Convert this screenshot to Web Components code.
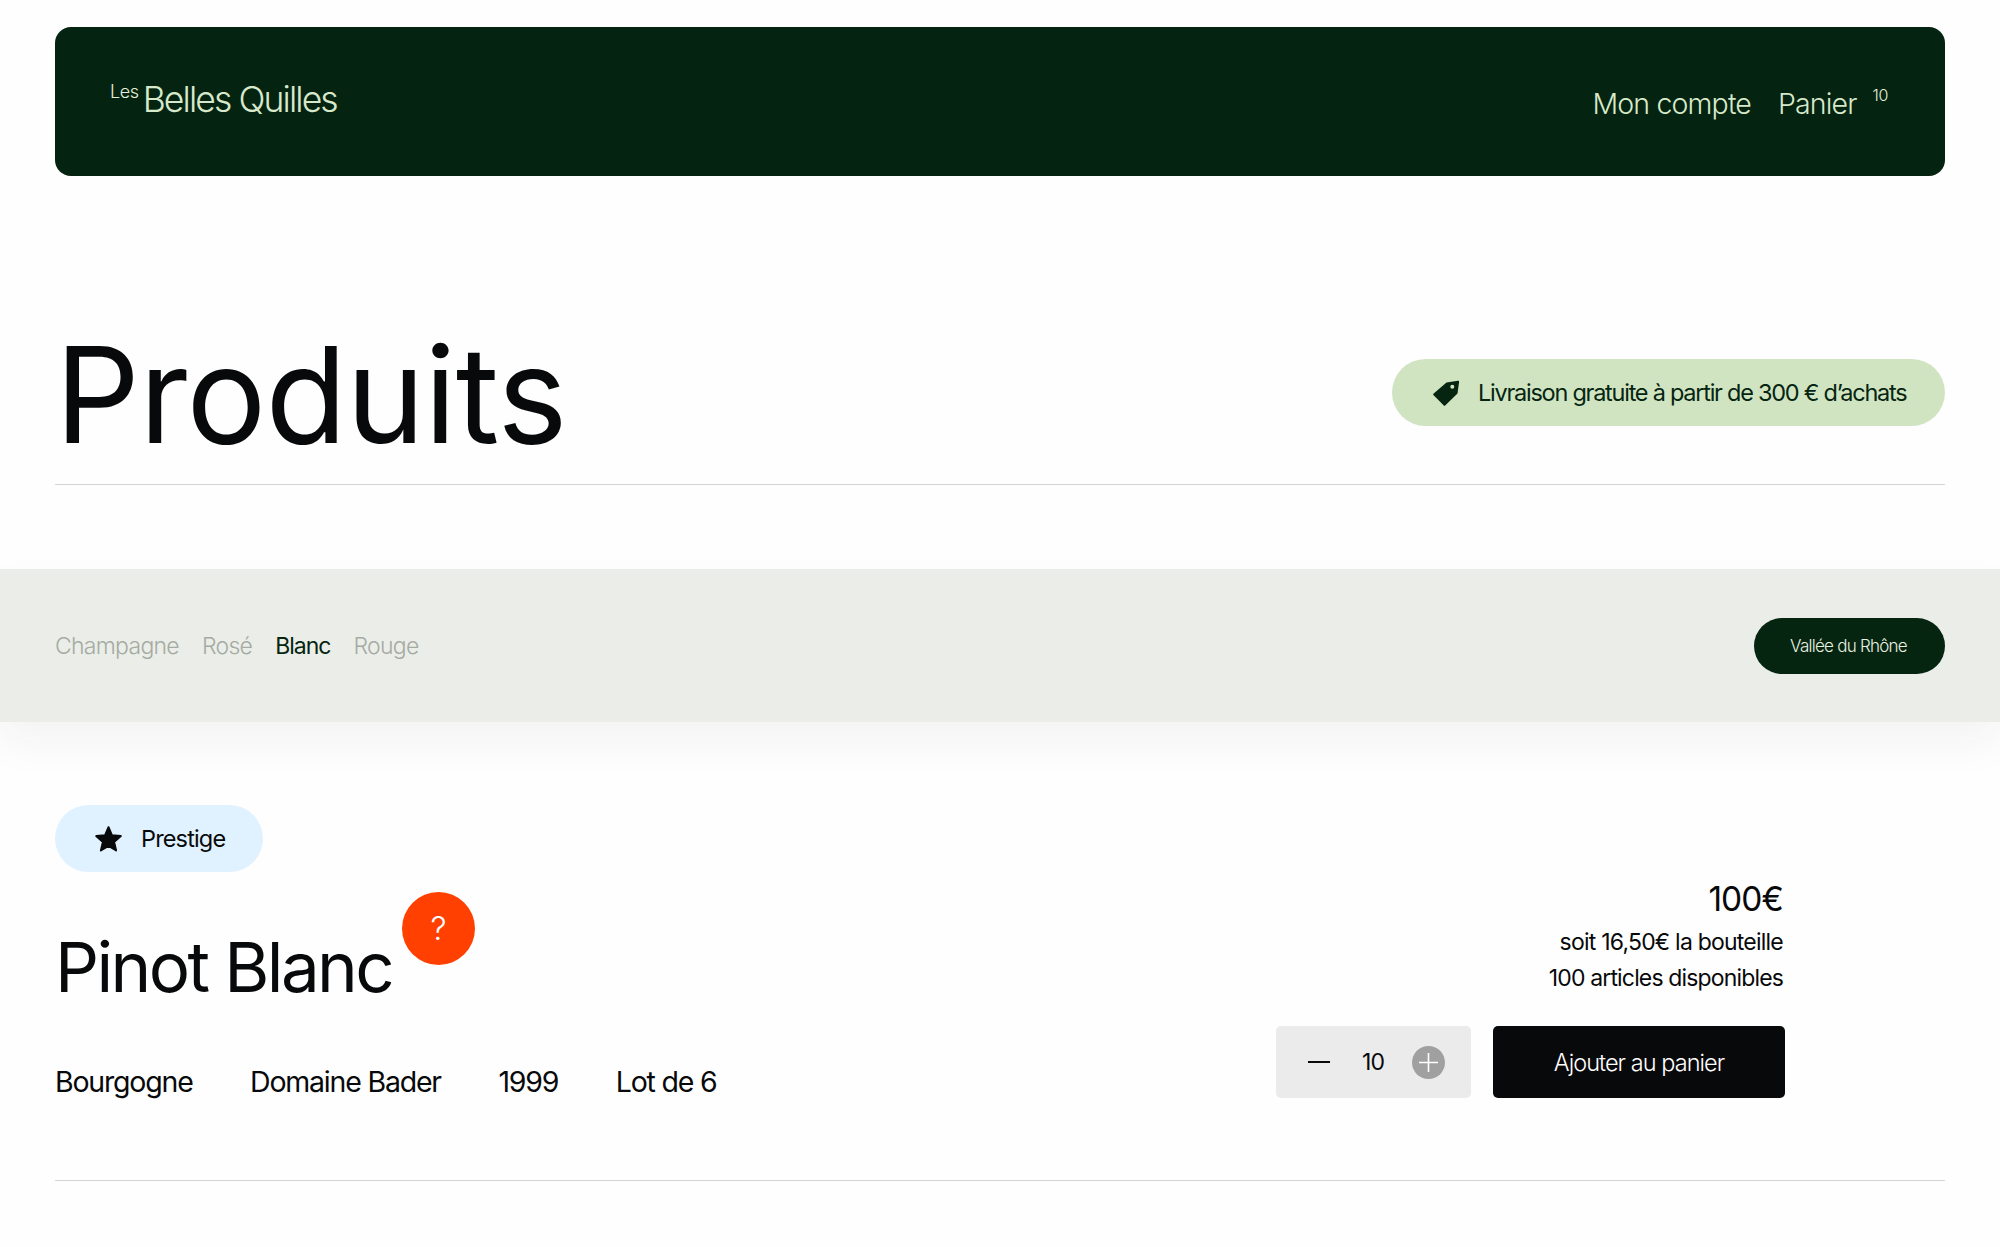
<!DOCTYPE html>
<html lang="fr">
<head>
<meta charset="utf-8">
<title>Produits</title>
<style>
  html, body { margin: 0; background: #fefefe; }
  body { font-family: Inter, "Noto Sans", sans-serif; color: #08090a; overflow: hidden; height: 1247px; }
</style>
</head>
<body>
<site-header></site-header>
<page-title>
  <promo-pill>Livraison gratuite à partir de 300 € d’achats</promo-pill>
</page-title>
<filter-bar></filter-bar>
<product-row name="Pinot Blanc" price="100€" unit="soit 16,50€ la bouteille" stock="100 articles disponibles" qty="10"></product-row>

<script>
// Header
class SiteHeader extends HTMLElement {
  constructor() {
    super();
    this.attachShadow({ mode: "open" }).innerHTML = `
    <style>
      :host { display: block; padding: 27px 55px 0; }
      .bar {
        height: 149px; box-sizing: border-box; padding: 0 57px 0 55px;
        background: #042310; border-radius: 16px; color: #d8e9cb;
        display: flex; justify-content: space-between; align-items: flex-start;
      }
      .logo { display: flex; align-items: flex-start; margin-top: 49px; font-weight: 300; }
      .les { font-size: 18px; line-height: 24px; margin-right: 4px; margin-top: 4px; letter-spacing: -.4px; color: #e4f0da; }
      .name { font-size: 35.5px; line-height: 48px; letter-spacing: -1.9px; }
      nav { display: flex; align-items: flex-start; margin-top: 57px; font-size: 28.5px; line-height: 40px; letter-spacing: -.85px; font-weight: 300; }
      .account { margin-right: 27px; }
      sup { font-size: 16px; line-height: 20px; margin: 1px 0 0 16px; letter-spacing: -.4px; align-self: flex-start; color: #e4f0da; }
    </style>
    <div class="bar">
      <div class="logo"><span class="les">Les</span><span class="name">Belles Quilles</span></div>
      <nav><span class="account">Mon compte</span><span>Panier</span><sup>10</sup></nav>
    </div>`;
  }
}
customElements.define("site-header", SiteHeader);

// Title + slot on the right
class PageTitle extends HTMLElement {
  constructor() {
    super();
    this.attachShadow({ mode: "open" }).innerHTML = `
    <style>
      :host { display: block; margin: 0 55px; height: 309px; box-sizing: border-box; border-bottom: 1px solid #d4d4d4; padding-top: 144px; }
      .row { display: flex; justify-content: space-between; align-items: flex-start; }
      h1 { margin: 0; font-weight: 400; font-size: 133px; line-height: 150px; letter-spacing: -.7px; color: #08090a; }
      ::slotted(promo-pill) { margin-top: 39px; }
    </style>
    <div class="row"><h1>Produits</h1><slot></slot></div>`;
  }
}
customElements.define("page-title", PageTitle);

class PromoPill extends HTMLElement {
  constructor() {
    super();
    this.attachShadow({ mode: "open" }).innerHTML = `
    <style>
      :host { display: flex; align-items: center; height: 67px; width: 553px; box-sizing: border-box; padding-left: 40px; background: #d1e4c2; border-radius: 34px; color: #052511; font-size: 23.5px; letter-spacing: -1.25px; white-space: nowrap; }
      svg { width: 28px; height: 28px; margin-right: 18px; flex: none; }
    </style>
    <svg viewBox="0 0 28 28"><path fill="#052511" fill-rule="evenodd" d="M14.5 3.5 26 1.8c.7-.1 1.2.4 1.1 1.1l-1.6 11.5L13.2 26.6c-.4.4-1 .4-1.4 0L1.4 16.1c-.4-.4-.4-1 0-1.4L14.5 3.5Zm5.8 2.2a2 2 0 1 0 0 4 2 2 0 0 0 0-4Z"/></svg>
    <slot></slot>`;
  }
}
customElements.define("promo-pill", PromoPill);

// Filter band
class FilterBar extends HTMLElement {
  constructor() {
    super();
    this.attachShadow({ mode: "open" }).innerHTML = `
    <style>
      :host { display: flex; justify-content: space-between; align-items: center; box-sizing: border-box; height: 153px; margin-top: 84px; padding: 0 55px; background: #ebeee8; box-shadow: 0 20px 40px rgba(20, 30, 20, .05); font-size: 23px; letter-spacing: -.72px; font-weight: 300; }
      .tabs { display: flex; gap: 23px; color: #a5aba3; }
      .on { color: #052511; font-weight: 400; letter-spacing: -1px; }
      .region { width: 191px; height: 56px; padding-right: 2px; box-sizing: border-box; display: flex; align-items: center; justify-content: center; background: #052511; border-radius: 28px; color: #e8f0e0; font-size: 17px; letter-spacing: -.75px; }
    </style>
    <div class="tabs"><span>Champagne</span><span>Rosé</span><span class="on">Blanc</span><span>Rouge</span></div>
    <div class="region">Vallée du Rhône</div>`;
  }
}
customElements.define("filter-bar", FilterBar);

// Quantity control
class QtyStepper extends HTMLElement {
  constructor() {
    super();
    this.attachShadow({ mode: "open" }).innerHTML = `
    <style>
      :host { display: flex; align-items: center; width: 195px; height: 72px; box-sizing: border-box; padding-left: 32px; background: #ebebeb; border-radius: 5px; font-size: 23px; letter-spacing: -1px; color: #08090a; }
      .minus { width: 22px; height: 2px; background: #08090a; }
      .val { width: 32px; margin: 0 23px 0 27px; text-align: center; }
      .plus { width: 33px; height: 33px; }
    </style>
    <span class="minus"></span>
    <span class="val"></span>
    <svg class="plus" viewBox="0 0 33 33"><circle cx="16.5" cy="16.5" r="16.5" fill="#a0a0a0"/><path d="M16.5 7v19M7 16.5h19" stroke="#fff" stroke-width="1.6"/></svg>`;
    this.shadowRoot.querySelector(".val").textContent = this.getAttribute("value");
  }
}
customElements.define("qty-stepper", QtyStepper);

// One product line
class ProductRow extends HTMLElement {
  constructor() {
    super();
    this.attachShadow({ mode: "open" }).innerHTML = `
    <style>
      :host { display: block; position: relative; margin: 0 55px; height: 459px; box-sizing: border-box; border-bottom: 1px solid #d4d4d4; padding-top: 83px; }
      .grid { display: flex; justify-content: space-between; }
      .tag { display: inline-flex; align-items: center; height: 67px; padding: 0 37px 0 39px; background: #e0f1ff; border-radius: 34px; font-size: 23.5px; letter-spacing: -.85px; box-sizing: border-box; width: 208px; }
      .tag svg { width: 29px; height: 28px; margin-right: 18px; flex: none; }
      .head { position: relative; display: inline-block; margin-top: 53px; }
      h2 { margin: 0; font-weight: 400; font-size: 69px; line-height: 84px; letter-spacing: -2.6px; }
      .help { position: absolute; left: 347px; top: -33px; width: 73px; height: 73px; border-radius: 50%; background: #ff4001; color: #fff; display: flex; align-items: center; justify-content: center; font-size: 32px; font-weight: 300; }
      .meta { display: flex; gap: 57.5px; margin-top: 55px; font-size: 28.5px; line-height: 36px; letter-spacing: -1.2px; }
      .buy { width: 510px; margin-right: 160px; display: flex; flex-direction: column; align-items: flex-end; padding-top: 72px; }
      .price { font-size: 33.5px; line-height: 44px; letter-spacing: -.9px; margin-right: 2px; }
      .sub { font-size: 23px; line-height: 36px; letter-spacing: -.78px; margin-right: 2px; }
      .sub.first { margin-top: 3px; }
      .sub.stock { letter-spacing: -.85px; }
      .actions { display: flex; gap: 22px; margin-top: 30px; }
      .add { width: 292px; height: 72px; display: flex; align-items: center; justify-content: center; background: #08090a; color: #fff; border-radius: 5px; font-size: 23.5px; letter-spacing: -.95px; font-weight: 300; }
    </style>
    <div class="grid">
      <div>
        <div class="tag">
          <svg viewBox="0 0 29 28"><path fill="#08090a" stroke="#08090a" stroke-width="2" stroke-linejoin="round" d="M14.5 2.2 18 10.3l8.8.8-6.7 5.8 2 8.6-7.6-4.5-7.6 4.5 2-8.6-6.7-5.8 8.8-.8z"/></svg>
          <span>Prestige</span>
        </div>
        <div><div class="head"><h2></h2><span class="help">?</span></div></div>
        <div class="meta"><span>Bourgogne</span><span>Domaine Bader</span><span>1999</span><span>Lot de 6</span></div>
      </div>
      <div class="buy">
        <div class="price"></div>
        <div class="sub first"></div>
        <div class="sub stock"></div>
        <div class="actions"><qty-stepper></qty-stepper><div class="add">Ajouter au panier</div></div>
      </div>
    </div>`;
    const r = this.shadowRoot;
    r.querySelector("h2").textContent = this.getAttribute("name");
    r.querySelector(".price").textContent = this.getAttribute("price");
    r.querySelector(".first").textContent = this.getAttribute("unit");
    r.querySelector(".stock").textContent = this.getAttribute("stock");
    r.querySelector("qty-stepper").shadowRoot.querySelector(".val").textContent = this.getAttribute("qty");
  }
}
customElements.define("product-row", ProductRow);
</script>
</body>
</html>
